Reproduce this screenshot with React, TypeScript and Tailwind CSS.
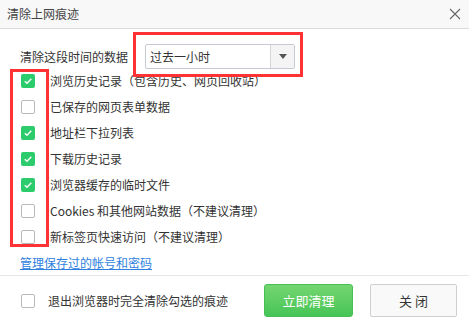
import React from "react";

const font = { fontFamily: '"Noto Sans CJK SC", "Noto Sans", sans-serif' };

function Box({ checked }: { checked: boolean }) {
  if (checked) {
    return (
      <div className="w-[14px] h-[14px] rounded-[2px] bg-[#2ccb6c] flex items-center justify-center shrink-0">
        <svg width="10" height="10" viewBox="0 0 10 10">
          <path d="M1.8 5.2 L4 7.3 L8.3 2.8" fill="none" stroke="white" strokeWidth="1.3" />
        </svg>
      </div>
    );
  }
  return <div className="w-[14px] h-[14px] rounded-[2px] border border-[#b8b8b8] bg-white shrink-0" />;
}

const items: [string, boolean][] = [
  ["浏览历史记录（包含历史、网页回收站）", true],
  ["已保存的网页表单数据", false],
  ["地址栏下拉列表", true],
  ["下载历史记录", true],
  ["浏览器缓存的临时文件", true],
  ["Cookies 和其他网站数据（不建议清理）", false],
  ["新标签页快速访问（不建议清理）", false],
];

export default function App() {
  return (
    <div className="w-[469px] h-[325px] bg-white text-[#333] text-[12px] flex flex-col overflow-hidden" style={font}>
      <div className="h-[29px] shrink-0 bg-[#f8f8f8] border-b border-[#dcdcdc] flex items-center justify-between pl-[7px] pr-[7px]">
        <span className="text-[12px] text-[#444]">清除上网痕迹</span>
        <svg width="12" height="12" viewBox="0 0 12 12" className="mr-[1px]">
          <path d="M1 1 L11 11 M11 1 L1 11" stroke="#666" strokeWidth="1.1" />
        </svg>
      </div>

      <div className="h-[39px] shrink-0 flex items-start pt-[15px] pl-[20px] relative z-10">
        <div className="h-[25px] flex items-center w-[125px]">清除这段时间的数据</div>
        <div className="relative">
          <div className="w-[150px] h-[25px] border border-[#c6cbd1] rounded-[2px] flex bg-white">
            <div className="flex-1 flex items-center pl-[4px]">过去一小时</div>
            <div className="w-[24px] bg-[#f4f4f4] border-l border-[#d6d6d6] flex items-center justify-center">
              <svg width="8" height="5" viewBox="0 0 8 5">
                <path d="M0 0 L8 0 L4 5 Z" fill="#555" />
              </svg>
            </div>
          </div>
          <div className="absolute left-[-12px] top-[-12px] right-[-8px] bottom-[-8px] border-[3px] border-[#ff3333] pointer-events-none" />
        </div>
      </div>

      <div className="relative shrink-0">
        {items.map(([t, c]) => (
          <div key={t} className="h-[26px] flex items-center">
            <div className="w-[50px] pl-[21px] flex items-center">
              <Box checked={c} />
            </div>
            <span>{t}</span>
          </div>
        ))}
        <div className="absolute left-[10px] top-[1px] w-[39px] h-[178px] border-[3px] border-[#ff3333] pointer-events-none" />
      </div>

      <div className="h-[25px] shrink-0 flex items-center pl-[20px]">
        <span className="text-[#2f7fe0] underline">管理保存过的帐号和密码</span>
      </div>

      <div className="h-[1px] bg-[#e6e6e6] shrink-0" />

      <div className="flex-1 flex items-center pl-[21px] pr-[12px]">
        <Box checked={false} />
        <span className="ml-[13px]">退出浏览器时完全清除勾选的痕迹</span>
        <div className="ml-auto flex gap-[17px] items-center">
          <div className="w-[89px] h-[33px] rounded-[3px] bg-gradient-to-b from-[#74d670] to-[#45c556] border border-[#45bf56] text-white text-[13px] flex items-center justify-center">
            立即清理
          </div>
          <div className="w-[87px] h-[33px] rounded-[2px] bg-[#f9f9f9] border border-[#cfcfcf] text-[#333] text-[13px] flex items-center justify-center">
            关 闭
          </div>
        </div>
      </div>
    </div>
  );
}
